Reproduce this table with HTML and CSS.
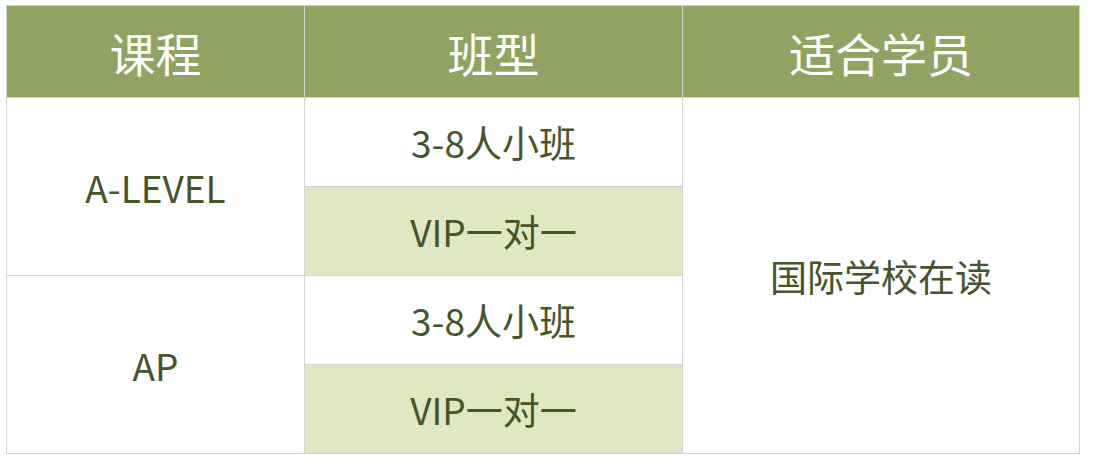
FILE: index.html
```html
<!DOCTYPE html>
<html lang="zh-CN">
<head>
<meta charset="utf-8">
<link rel="stylesheet" href="styles.css">
</head>
<body>
<table class="course-table">
  <colgroup>
    <col class="c1">
    <col class="c2">
    <col class="c3">
  </colgroup>
  <thead>
    <tr class="head-row">
      <th>课程</th>
      <th>班型</th>
      <th>适合学员</th>
    </tr>
  </thead>
  <tbody>
    <tr class="row">
      <td rowspan="2">A-LEVEL</td>
      <td>3-8人小班</td>
      <td rowspan="4">国际学校在读</td>
    </tr>
    <tr class="row">
      <td class="alt">VIP一对一</td>
    </tr>
    <tr class="row">
      <td rowspan="2">AP</td>
      <td>3-8人小班</td>
    </tr>
    <tr class="row">
      <td class="alt">VIP一对一</td>
    </tr>
  </tbody>
</table>
</body>
</html>
```
FILE: styles.css
```css
html, body {
  margin: 0;
  background: #ffffff;
}
body {
  padding: 5px 6px;
  font-family: "Noto Sans CJK SC", "Noto Sans", sans-serif;
}
.course-table {
  border-collapse: collapse;
  table-layout: fixed;
  width: 1073px;
}
.c1 { width: 298px; }
.c2 { width: 378px; }
.c3 { width: 397px; }
.course-table th,
.course-table td {
  border: 1px solid #d0d4d9;
  text-align: center;
  vertical-align: middle;
  padding: 0;
}
.head-row th {
  height: 91px;
  background: #90a462;
  color: #ffffff;
  font-size: 46px;
  font-weight: 400;
}
.row td {
  height: 88px;
  color: #46542a;
  font-size: 37px;
  font-weight: 400;
}
.row td.alt {
  background: #dfe8c3;
}
```
